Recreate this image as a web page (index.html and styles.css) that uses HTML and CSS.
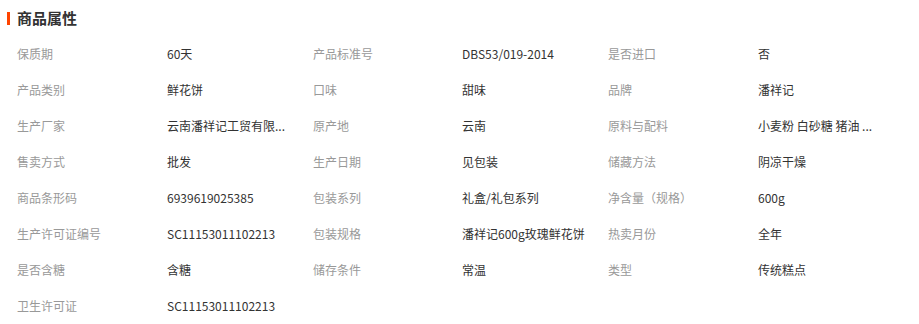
FILE: index.html
```html
<!DOCTYPE html>
<html lang="zh-CN">
<head>
<meta charset="utf-8">
<title>商品属性</title>
<link rel="stylesheet" href="styles.css">
</head>
<body>
<div class="panel">
  <div class="title"><span class="bar"></span><span class="title-text">商品属性</span></div>
  <div class="grid">
    <div class="k">保质期</div><div class="v">60天</div>
    <div class="k">产品标准号</div><div class="v">DBS53/019-2014</div>
    <div class="k">是否进口</div><div class="v">否</div>

    <div class="k">产品类别</div><div class="v">鲜花饼</div>
    <div class="k">口味</div><div class="v">甜味</div>
    <div class="k">品牌</div><div class="v">潘祥记</div>

    <div class="k">生产厂家</div><div class="v">云南潘祥记工贸有限...</div>
    <div class="k">原产地</div><div class="v">云南</div>
    <div class="k">原料与配料</div><div class="v">小麦粉 白砂糖 猪油 ...</div>

    <div class="k">售卖方式</div><div class="v">批发</div>
    <div class="k">生产日期</div><div class="v">见包装</div>
    <div class="k">储藏方法</div><div class="v">阴凉干燥</div>

    <div class="k">商品条形码</div><div class="v">6939619025385</div>
    <div class="k">包装系列</div><div class="v">礼盒/礼包系列</div>
    <div class="k">净含量（规格）</div><div class="v">600g</div>

    <div class="k">生产许可证编号</div><div class="v">SC11153011102213</div>
    <div class="k">包装规格</div><div class="v">潘祥记600g玫瑰鲜花饼</div>
    <div class="k">热卖月份</div><div class="v">全年</div>

    <div class="k">是否含糖</div><div class="v">含糖</div>
    <div class="k">储存条件</div><div class="v">常温</div>
    <div class="k">类型</div><div class="v">传统糕点</div>

    <div class="k">卫生许可证</div><div class="v">SC11153011102213</div>
  </div>
</div>
</body>
</html>
```
FILE: styles.css
```css
html, body {
  margin: 0;
  padding: 0;
  background: #fff;
}
body {
  font-family: "Noto Sans CJK SC", "Liberation Sans", sans-serif;
  font-size: 12px;
  color: #333;
}
.panel {
  width: 919px;
}
.title {
  display: flex;
  align-items: center;
  height: 36px;
  padding-left: 7px;
}
.bar {
  width: 3px;
  height: 13px;
  background: #ff4400;
  margin-right: 7px;
}
.title-text {
  font-size: 15px;
  font-weight: bold;
  color: #333;
  line-height: 20px;
}
.grid {
  display: grid;
  grid-template-columns: 150px 146px 149px 146px 150px 146px;
  grid-auto-rows: 36px;
  padding-left: 17px;
}
.k, .v {
  display: flex;
  align-items: center;
  line-height: 16px;
  white-space: nowrap;
}
.k {
  color: #999;
}
.v {
  color: #333;
}
```
